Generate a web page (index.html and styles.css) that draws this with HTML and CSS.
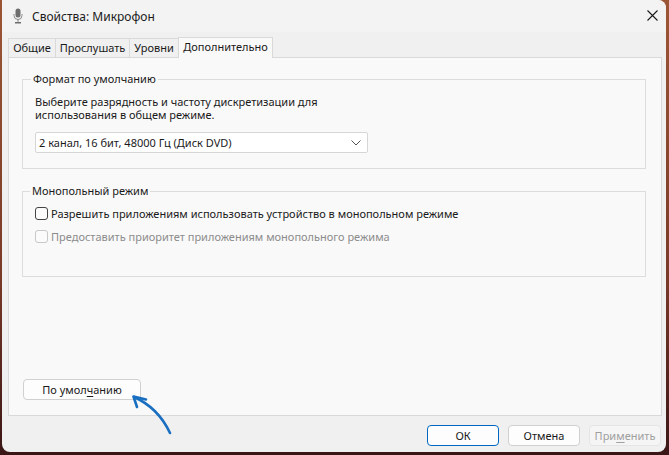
FILE: index.html
```html
<!DOCTYPE html>
<html lang="ru">
<head>
<meta charset="utf-8">
<link rel="stylesheet" href="styles.css">
</head>
<body>
<div class="window">
  <div class="titlebar">
    <svg class="app-icon" width="10" height="16" viewBox="0 0 10 16">
      <rect x="2.5" y="0.5" width="5" height="9" rx="2.5" fill="#6e6e6e"/>
      <path d="M1 6 v1.5 a4 4 0 0 0 8 0 V6" fill="none" stroke="#8a8a8a" stroke-width="1"/>
      <rect x="4.5" y="11" width="1" height="3" fill="#8a8a8a"/>
      <rect x="2" y="14" width="6" height="1.5" fill="#6e6e6e"/>
    </svg>
    <span class="title">Свойства: Микрофон</span>
    <svg class="close" width="11" height="11" viewBox="0 0 11 11">
      <path d="M0.5 0.5 L10.5 10.5 M10.5 0.5 L0.5 10.5" stroke="#1a1a1a" stroke-width="1.1"/>
    </svg>
  </div>
  <div class="content">
    <div class="tabs">
      <div class="tab tab-general">Общие</div>
      <div class="tab tab-listen">Прослушать</div>
      <div class="tab tab-levels">Уровни</div>
      <div class="tab tab-advanced active">Дополнительно</div>
    </div>
    <div class="panel">
      <fieldset class="group group-format">
        <legend>Формат по умолчанию</legend>
        <p class="desc"><span class="line">Выберите разрядность и частоту дискретизации для</span><span class="line">использования в общем режиме.</span></p>
        <div class="select">
          <span>2 канал, 16 бит, 48000 Гц (Диск DVD)</span>
          <svg width="10" height="6" viewBox="0 0 10 6"><path d="M0.5 0.5 L5 5 L9.5 0.5" fill="none" stroke="#555" stroke-width="1"/></svg>
        </div>
      </fieldset>
      <fieldset class="group group-excl">
        <legend>Монопольный режим</legend>
        <label class="check"><span class="box"></span>Разрешить приложениям использовать устройство в монопольном режиме</label>
        <label class="check disabled"><span class="box"></span>Предоставить приоритет приложениям монопольного режима</label>
      </fieldset>
      <div class="spacer"></div>
      <button class="btn default-btn">По умол<u>ч</u>анию</button>
    </div>
    <div class="footer">
      <button class="btn ok">ОК</button>
      <button class="btn">Отмена</button>
      <button class="btn disabled-btn">При<u>м</u>енить</button>
    </div>
  </div>
  <svg class="arrow" width="60" height="60" viewBox="0 0 60 60">
    <path d="M48 48 C41 33 30 20 12 12" fill="none" stroke="#1a6fc0" stroke-width="2.6" stroke-linecap="round"/>
    <path d="M24 14.5 L11.5 11.5 L15 22" fill="none" stroke="#1a6fc0" stroke-width="2.6" stroke-linecap="round" stroke-linejoin="round"/>
  </svg>
</div>
</body>
</html>
```
FILE: styles.css
```css
html, body {
  margin: 0;
  padding: 0;
}
body {
  width: 669px;
  height: 455px;
  background: linear-gradient(180deg, #9b5634 0%, #7a3a28 60%, #3a1616 100%);
  font-family: "Noto Sans", "Open Sans", sans-serif;
  font-size: 11px;
  color: #1a1a1a;
  overflow: hidden;
}
.window {
  position: relative;
  margin-left: 2px;
  width: 664px;
  height: 452px;
  background: #f0f0f0;
  border-radius: 0 8px 8px 8px;
  display: flex;
  flex-direction: column;
  overflow: hidden;
}
.titlebar {
  height: 32px;
  background: #f3f3f3;
  display: flex;
  align-items: center;
  padding-left: 11px;
  flex: none;
}
.app-icon {
  margin-right: 9px;
  margin-top: -1px;
}
.title {
  font-size: 12px;
  color: #1a1a1a;
  flex: 1;
}
.close {
  margin-right: 8px;
  margin-top: -1px;
}
.content {
  flex: 1;
  display: flex;
  flex-direction: column;
  padding: 6px 4px 6px 6px;
}
.tabs {
  display: flex;
  height: 19px;
  align-items: flex-end;
  position: relative;
  z-index: 1;
}
.tab {
  height: 19px;
  line-height: 18px;
  text-align: center;
  border: 1px solid #d9d9d9;
  border-bottom: none;
  margin-right: -1px;
  background: #f0f0f0;
  box-sizing: border-box;
  white-space: nowrap;
}
.tab-general { width: 48px; }
.tab-listen { width: 75px; }
.tab-levels { width: 50px; }
.tab-advanced { width: 95px; }
.tab.active {
  height: 21px;
  margin-bottom: -1px;
  background: #f9f9f9;
  line-height: 18px;
  position: relative;
}
.panel {
  flex: 1;
  background: #f9f9f9;
  border: 1px solid #d9d9d9;
  display: flex;
  flex-direction: column;
  padding: 13px 15px 15px 13px;
  box-sizing: border-box;
}
.group {
  margin: 0;
  border: 1px solid #dcdcdc;
  padding: 0 12px;
  min-width: 0;
}
.group legend {
  padding: 0 2px;
  margin-left: -4px;
  line-height: 16px;
}
.group-excl legend {
  margin-left: -5px;
}
.group-format {
  height: 98px;
  box-sizing: border-box;
}
.desc {
  margin: 8px 0 0 0;
  display: flex;
  flex-direction: column;
  gap: 0;
}
.desc .line {
  display: block;
  height: 13px;
  line-height: 13px;
}
.select {
  margin-top: 11px;
  width: 333px;
  height: 21px;
  box-sizing: border-box;
  border: 1px solid #d6d6d6;
  border-radius: 2px;
  background: #fff;
  display: flex;
  align-items: center;
  justify-content: space-between;
  padding: 0 6px 0 3px;
}
.group-excl {
  margin-top: 14px;
  height: 94px;
  box-sizing: border-box;
  padding-top: 6px;
}
.check {
  display: flex;
  align-items: center;
  height: 17px;
  margin-bottom: 6px;
  white-space: nowrap;
}
.check .box {
  width: 11px;
  height: 11px;
  border: 1px solid #444;
  border-radius: 3px;
  margin-right: 3px;
  background: #fbfbfb;
}
.check.disabled {
  color: #8c8c8c;
}
.check.disabled .box {
  border-color: #c8c8c8;
}
.spacer {
  flex: 1;
}
.btn {
  font-family: "Noto Sans", "Open Sans", sans-serif;
  font-size: 11px;
  color: #1a1a1a;
  background: #fdfdfd;
  border: 1px solid #d0d0d0;
  border-radius: 4px;
  height: 21px;
  padding: 0;
  box-sizing: border-box;
}
.btn u {
  text-decoration-thickness: 1px;
  text-underline-offset: 2px;
}
.default-btn {
  width: 118px;
  align-self: flex-start;
  margin-left: 1px;
}
.footer {
  display: flex;
  justify-content: flex-end;
  gap: 9px;
  margin-top: 9px;
  padding-right: 1px;
}
.footer .btn {
  width: 72px;
}
.btn.ok {
  border-color: #0067c0;
}
.btn.disabled-btn {
  background: #f5f5f5;
  border-color: #e5e5e5;
  color: #a0a0a0;
}
.arrow {
  position: absolute;
  left: 120px;
  top: 385px;
}
```
